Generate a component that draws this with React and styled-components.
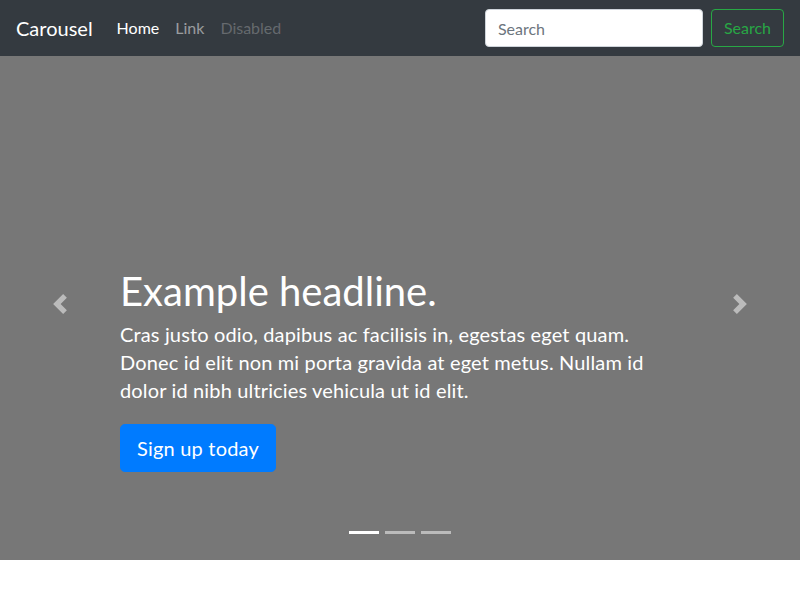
import React, { useState } from "react";
import styled, { createGlobalStyle } from "styled-components";

const GlobalStyle = createGlobalStyle`
    html, body {
        margin: 0;
        padding: 0;
        background: #fff;
    }
    body {
        font-family: Lato, "Open Sans", "Liberation Sans", sans-serif;
        font-size: 16px;
        line-height: 1.5;
        color: #212529;
    }
    * { box-sizing: border-box; }
`;

const Navbar = styled.nav`
    display: flex;
    align-items: center;
    height: 56px;
    padding: 8px 16px;
    background-color: #343a40;
`;

const Brand = styled.a`
    font-size: 20px;
    line-height: 30px;
    padding: 5px 0;
    margin-right: 16px;
    color: #fff;
    text-decoration: none;
    white-space: nowrap;
`;

const NavList = styled.ul`
    display: flex;
    list-style: none;
    margin: 0 auto 0 0;
    padding: 0;
`;

const NavLink = styled.a`
    display: block;
    padding: 8px;
    font-size: 16px;
    line-height: 24px;
    text-decoration: none;
    color: ${p => p.active ? '#fff' : p.disabled ? 'rgba(255,255,255,.25)' : 'rgba(255,255,255,.5)'};
`;

const SearchForm = styled.form`
    display: flex;
    align-items: center;
`;

const SearchInput = styled.input`
    width: 218px;
    height: 38px;
    padding: 6px 12px;
    margin-right: 8px;
    font-family: inherit;
    font-size: 16px;
    color: #495057;
    background: #fff;
    border: 1px solid #ced4da;
    border-radius: 4px;
    outline: none;
    &::placeholder { color: #6c757d; }
`;

const OutlineButton = styled.button`
    height: 38px;
    padding: 6px 12px;
    font-family: inherit;
    font-size: 16px;
    line-height: 24px;
    color: #28a745;
    background: transparent;
    border: 1px solid #28a745;
    border-radius: 4px;
`;

const Carousel = styled.div`
    position: relative;
    height: 504px;
    background-color: #777;
    overflow: hidden;
`;

const Slide = styled.div`
    height: 100%;
    display: flex;
    flex-direction: column;
    justify-content: flex-end;
    padding: 0 15% 48px;
`;

const Caption = styled.div`
    padding: 20px 0;
    color: #fff;
    text-align: left;
`;

const Headline = styled.h1`
    margin: 0 0 8px;
    padding-top: 6px;
    font-size: 40px;
    font-weight: 400;
    line-height: 42px;
`;

const Lead = styled.p`
    margin: 0 0 20px;
    font-size: 20px;
    line-height: 1.4;
    letter-spacing: 0.15px;
`;

const ButtonRow = styled.p`
    display: flex;
    margin: 0 0 20px;
`;

const PrimaryButton = styled.a`
    display: inline-block;
    padding: 8px 16px;
    font-size: 20px;
    line-height: 30px;
    letter-spacing: 0.2px;
    color: #fff;
    background-color: #007bff;
    border: 1px solid #007bff;
    border-radius: 4.8px;
    text-decoration: none;
`;

const Control = styled.a`
    position: absolute;
    top: 0;
    bottom: 8px;
    ${p => p.side}: 0;
    width: 15%;
    display: flex;
    align-items: center;
    justify-content: center;
    opacity: .5;
`;

const Indicators = styled.ol`
    position: absolute;
    left: 0;
    right: 0;
    bottom: 0;
    display: flex;
    justify-content: center;
    margin: 0 15% 16px;
    padding: 0;
    list-style: none;
`;

const Indicator = styled.li`
    width: 30px;
    height: 3px;
    margin: 10px 3px;
    background-color: #fff;
    opacity: ${p => p.active ? 1 : .5};
    cursor: pointer;
`;

const ChevronLeft = () => (
    <svg width="20" height="20" viewBox="0 0 8 8" fill="#fff">
        <path d="M5.25 0l-4 4 4 4 1.5-1.5L4.25 4l2.5-2.5L5.25 0z" />
    </svg>
);

const ChevronRight = () => (
    <svg width="20" height="20" viewBox="0 0 8 8" fill="#fff">
        <path d="M2.75 0l-1.5 1.5L3.75 4l-2.5 2.5L2.75 8l4-4-4-4z" />
    </svg>
);

const App = () => {
    const [active, setActive] = useState(0);

    return (
        <>
            <GlobalStyle />
            <Navbar>
                <Brand href="#">Carousel</Brand>
                <NavList>
                    <li><NavLink href="#" active>Home</NavLink></li>
                    <li><NavLink href="#">Link</NavLink></li>
                    <li><NavLink disabled>Disabled</NavLink></li>
                </NavList>
                <SearchForm onSubmit={e => e.preventDefault()}>
                    <SearchInput type="text" placeholder="Search" />
                    <OutlineButton type="submit">Search</OutlineButton>
                </SearchForm>
            </Navbar>
            <Carousel>
                <Slide>
                    <Caption>
                        <Headline>Example headline.</Headline>
                        <Lead>Cras justo odio, dapibus ac facilisis in, egestas eget quam. Donec id elit non mi porta gravida at eget metus. Nullam id dolor id nibh ultricies vehicula ut id elit.</Lead>
                        <ButtonRow><PrimaryButton href="#">Sign up today</PrimaryButton></ButtonRow>
                    </Caption>
                </Slide>
                <Control side="left" href="#"><ChevronLeft /></Control>
                <Control side="right" href="#"><ChevronRight /></Control>
                <Indicators>
                    {[0, 1, 2].map(i => (
                        <Indicator key={i} active={i === active} onClick={() => setActive(i)} />
                    ))}
                </Indicators>
            </Carousel>
        </>
    );
};

export default App;
